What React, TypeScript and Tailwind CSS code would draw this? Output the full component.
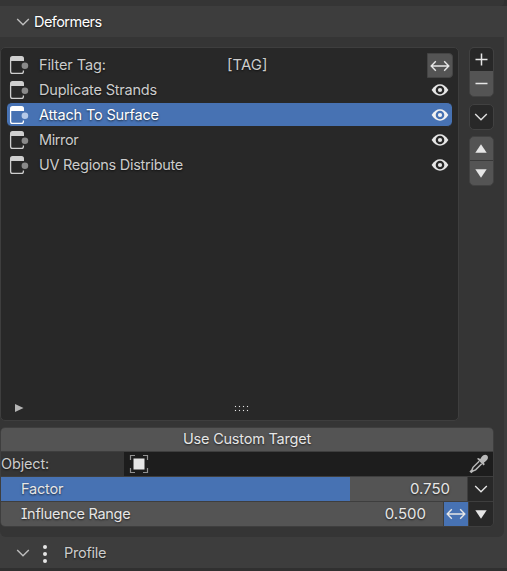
import React from "react";

const rows = [
  { name: "Duplicate Strands", tracking: "tracking-[-0.2px]" },
  { name: "Attach To Surface", tracking: "tracking-[-0.16px]" },
  { name: "Mirror", tracking: "tracking-[-0.4px]" },
  { name: "UV Regions Distribute", tracking: "tracking-[-0.28px]" },
];

function Chevron({ color = "#e0e0e0" }: { color?: string }) {
  return (
    <svg width="14" height="8" viewBox="0 0 14 8" fill="none" stroke={color} strokeWidth="1.4">
      <path d="M1.2 1 7 6.800 12.800 1" />
    </svg>
  );
}

function DoubleArrow() {
  return (
    <svg width="20" height="12" viewBox="0 0 20 12" fill="none" stroke="#e6e6e6" strokeWidth="1.4">
      <path d="M1.5 6H18.500M5.800 1.200 1.200 6 5.800 10.800M14.200 1.200 18.800 6 14.200 10.800" />
    </svg>
  );
}

function Eye({ selected = false }: { selected?: boolean }) {
  const c = selected ? "#f2f2f2" : "#e6e6e6";
  return (
    <svg width="18" height="14" viewBox="0 0 18 14">
      <path d="M.6 7C3 3.200 5.800 1.300 9 1.300S15 3.200 17.400 7C15 10.800 12.200 12.700 9 12.700S3 10.800.6 7Z" fill={c} />
      <circle cx="9" cy="7" r="4.300" fill={selected ? "#4772b3" : "#282828"} />
      <circle cx="9" cy="7" r="2.100" fill={c} />
    </svg>
  );
}

function NodeIcon({ selected = false }: { selected?: boolean }) {
  const c = selected ? "#ffffff" : "#cfcfcf";
  return (
    <svg width="20" height="20" viewBox="0 0 20 20">
      <path d="M1 6V3.500Q1 1 3.500 1H12.500Q15 1 15 3.500V6Z" fill={c} />
      <path d="M1.600 5V16.500Q1.600 18.400 3.500 18.400H12.500Q14.400 18.400 14.400 16.500V15.500" fill="none" stroke={c} strokeWidth="1.300" />
      <circle cx="15.900" cy="10.700" r="3.300" fill={selected ? "#b5c9e8" : "#898989"} />
    </svg>
  );
}

function Triangle({ down = false }: { down?: boolean }) {
  return (
    <svg width="12" height="9" viewBox="0 0 12 9">
      <path d={down ? "M.3.3H11.700L6 8.700Z" : "M.3 8.700H11.700L6 .3Z"} fill="#e6e6e6" />
    </svg>
  );
}

function Eyedropper() {
  return (
    <svg width="20" height="20" viewBox="0 0 20 20">
      <path d="M8 4.800 9.200 3.900 11.300 5 12.500 3.100C14.500.3 16.800.2 18.200 1.500 19.600 3 19.200 5.300 16.700 7.300L15 8.500 15.700 10.500 14.600 11.400Z" fill="#b8b8b8" />
      <path d="M10.200 7.200 4 13.300 2.900 16.100 1.500 17.400 2.400 18.300 3.800 17 6.600 15.900 12.700 9.700" fill="none" stroke="#b8b8b8" strokeWidth="1.500" />
    </svg>
  );
}

function PropertyIcon() {
  return (
    <svg width="20" height="20" viewBox="0 0 20 20" fill="none">
      <path d="M1.500 6V1.500H6M14 1.500H18.500V6M18.500 14V18.500H14M6 18.500H1.500V14" stroke="#929292" strokeWidth="1.200" />
      <path d="M4.500 4.500H15.500V15.500H4.500Z" fill="#e6e6e6" />
    </svg>
  );
}

export default function App() {
  return (
    <div className="h-[571px] w-[507px] overflow-hidden bg-[#303030] font-['Inter',sans-serif] text-[14.5px] leading-[23px] text-[#cccccc] [font-feature-settings:'cv08'] [text-shadow:0_1px_2px_rgba(0,0,0,0.65)]">
      <div className="h-[6px] w-[504px] rounded-br bg-[#353535]" />
      <div className="flex h-[31px] items-center bg-[#3d3d3d] pl-4 text-[#ffffff]">
        <Chevron color="#bdbdbd" />
        <span className="ml-1 tracking-[-0.55px]">Deformers</span>
      </div>
      <div className="bg-[#3d3d3d]">
        <main className="h-[500px] w-[504px] rounded-b-md bg-[#353535] pt-[10px]">
          <div className="flex h-[374px]">
            <section className="flex h-[374px] w-[459px] flex-col rounded-[5px] border border-[#3e3e3e] bg-[#282828] px-[6px] pt-[4px]">
              <div className="flex h-[25px] shrink-0 items-center">
                <div className="ml-[2px] w-[30px]"><NodeIcon /></div>
                <span className="w-[188px] tracking-[-0.1px]">Filter Tag:</span>
                <span className="text-[15px]">[TAG]</span>
                <div className="relative top-px ml-auto -mr-px flex h-[25px] w-[26px] items-center justify-center rounded-r-[4px] border border-[#444444] bg-[#545454]"><DoubleArrow /></div>
              </div>
              {rows.map(({ name, tracking }, i) => (
                <div key={name} className={i === 1 ? "flex h-[25px] shrink-0 items-center rounded-[5px] border-y border-[#282828] bg-[#4772b3] text-white" : "flex h-[25px] shrink-0 items-center"}>
                  <div className="ml-[2px] w-[30px]"><NodeIcon selected={i === 1} /></div>
                  <span className={tracking}>{name}</span>
                  <div className="ml-auto mr-[3px]"><Eye selected={i === 1} /></div>
                </div>
              ))}
              <div className="mt-auto flex h-[25px] items-center">
                <svg className="ml-2" width="9" height="8" viewBox="0 0 9 8"><path d="M0 0 8.500 4 0 8Z" fill="#b5b5b5" /></svg>
                <div className="ml-[211px] mt-px grid grid-cols-4 gap-[3px]">
                  {Array.from({ length: 8 }, (_, i) => <span key={i} className="h-px w-px bg-[#e6e6e6] shadow-[0_0_1px_#aaaaaa]" />)}
                </div>
              </div>
            </section>
            <aside className="ml-[10px] w-[25px]">
              <div className="h-[50px] overflow-hidden rounded-[5px] border border-[#414141] bg-[#545454]">
                <div className="flex h-[23px] items-center justify-center bg-[#282828]">
                  <svg width="13" height="13" viewBox="0 0 13 13"><path d="M.5 6.500H12.500M6.500.5V12.500" stroke="#e6e6e6" strokeWidth="1.500" /></svg>
                </div>
                <div className="flex h-[24px] items-center justify-center">
                  <svg width="13" height="3" viewBox="0 0 13 3"><path d="M.5 1.500H12.500" stroke="#e6e6e6" strokeWidth="1.600" /></svg>
                </div>
              </div>
              <div className="mt-[7px] flex h-[26px] items-center justify-center rounded-[5px] border border-[#414141] bg-[#282828] pr-px"><Chevron /></div>
              <div className="mt-[6px] h-[50px] overflow-hidden rounded-[5px] border border-[#414141] bg-[#545454]">
                <div className="flex h-[24px] items-center justify-center border-b border-[#383838] pr-px"><Triangle /></div>
                <div className="flex h-[24px] items-center justify-center pr-px"><Triangle down /></div>
              </div>
            </aside>
          </div>
          <div className="mt-[6px] h-[100px] w-[494px] overflow-hidden rounded-[5px] border border-[#3e3e3e]">
            <div className="flex h-[24px] items-center justify-center border-b border-[#3e3e3e] bg-[#545454] pb-px tracking-[-0.22px] text-[#e6e6e6]"><span className="-mt-px">Use Custom Target</span></div>
            <div className="flex h-[25px] items-center border-b border-[#3e3e3e]">
              <span className="-mt-px w-[123px] tracking-[-0.16px]">Object:</span>
              <div className="flex h-full flex-1 items-center justify-between bg-[#1d1d1d] pl-[5px] pr-1"><PropertyIcon /><Eyedropper /></div>
            </div>
            <div className="flex h-[25px] border-b border-[#3e3e3e] text-[#e6e6e6]">
              <div className="flex w-[349px] items-center bg-[#4772b3] pb-px pl-5 tracking-[-0.2px]">Factor</div>
              <div className="flex w-[118px] items-center justify-end border-r border-[#3e3e3e] bg-[#545454] pb-px pr-[17px] text-[15px]">0.750</div>
              <div className="flex flex-1 items-center justify-center bg-[#282828]"><Chevron /></div>
            </div>
            <div className="flex h-[24px] text-[#e6e6e6]">
              <div className="flex w-[443px] items-center justify-between border-r border-[#3e3e3e] bg-[#545454] pb-px pl-5 pr-[17px]"><span className="tracking-[-0.28px]">Influence Range</span><span className="text-[15px]">0.500</span></div>
              <div className="flex w-[24px] items-center justify-center bg-[#4772b3]"><DoubleArrow /></div>
              <div className="flex flex-1 items-center justify-center border-l border-[#3e3e3e] bg-[#282828]"><Triangle down /></div>
            </div>
          </div>
        </main>
        <div className="flex h-[31px] items-center pl-4">
          <Chevron color="#bdbdbd" />
          <div className="ml-[13px] mt-[2px] grid gap-[3px]">
            {[0, 1, 2].map((i) => <span key={i} className="size-1 rounded-full bg-[#e6e6e6]" />)}
          </div>
          <span className="ml-[17px] tracking-[-0.25px]">Profile</span>
        </div>
      </div>
    </div>
  );
}
